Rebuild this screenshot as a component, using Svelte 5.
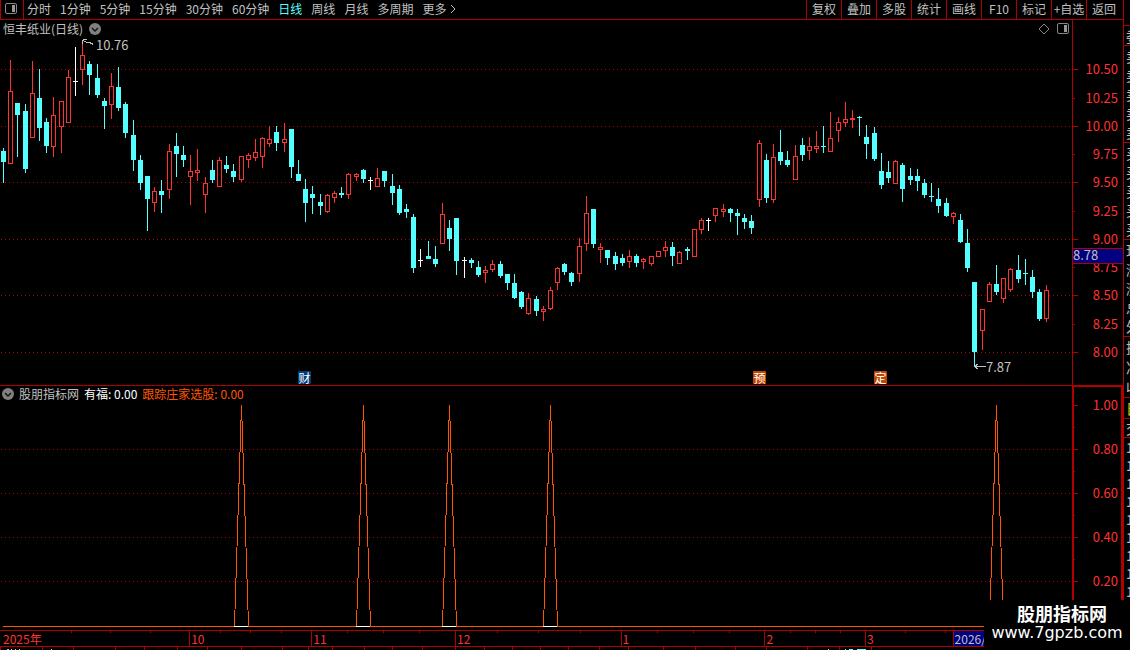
<script>
    const periods = ["分时", "1分钟", "5分钟", "15分钟", "30分钟", "60分钟", "日线", "周线", "月线", "多周期"];
    const tools = ["复权", "叠加", "多股", "统计", "画线", "F10", "标记", "+自选", "返回"];
    let activePeriod = "日线";

    // x, high, low, body top, body bottom, u = up, d = down, w = flat
    const candles = [
        [3, 148, 183, 151, 162, "d"], [10, 60, 164, 91, 164, "u"], [17, 103, 157, 103, 115, "d"], [25, 104, 173, 111, 169, "d"],
        [32, 61, 138, 93, 138, "u"], [39, 69, 141, 98, 128, "d"], [46, 118, 153, 122, 146, "d"], [53, 97, 157, 115, 147, "u"],
        [61, 101, 153, 101, 127, "u"], [68, 70, 123, 77, 123, "u"], [75, 47, 96, 81, 82, "w"], [82, 43, 85, 55, 70, "u"],
        [89, 61, 95, 64, 75, "d"], [97, 64, 98, 78, 95, "d"], [104, 98, 129, 101, 106, "d"], [111, 73, 119, 86, 105, "u"],
        [118, 67, 111, 87, 108, "d"], [125, 102, 138, 104, 133, "d"], [133, 120, 171, 135, 160, "d"], [140, 155, 190, 160, 183, "d"],
        [147, 176, 231, 176, 199, "d"], [154, 187, 212, 191, 203, "u"], [161, 180, 213, 191, 195, "d"], [169, 144, 199, 151, 190, "u"],
        [176, 133, 177, 146, 154, "d"], [183, 146, 167, 155, 160, "d"], [190, 155, 205, 171, 177, "u"], [197, 149, 181, 170, 173, "u"],
        [205, 177, 213, 183, 195, "u"], [212, 160, 183, 170, 180, "d"], [219, 157, 187, 160, 187, "u"], [226, 156, 173, 165, 169, "d"],
        [233, 164, 182, 171, 177, "d"], [241, 156, 182, 156, 180, "u"], [248, 153, 168, 155, 160, "u"], [255, 139, 161, 152, 158, "u"],
        [262, 137, 168, 138, 157, "u"], [269, 126, 147, 139, 144, "u"], [276, 126, 151, 132, 143, "d"], [284, 123, 152, 139, 143, "u"],
        [291, 129, 178, 129, 167, "d"], [298, 160, 181, 174, 181, "d"], [305, 179, 222, 189, 203, "d"], [312, 186, 214, 194, 198, "d"],
        [320, 194, 215, 202, 206, "d"], [327, 194, 213, 195, 212, "u"], [334, 191, 203, 193, 198, "u"], [341, 187, 198, 193, 195, "d"],
        [348, 173, 199, 174, 195, "u"], [356, 173, 181, 174, 177, "u"], [363, 169, 183, 170, 179, "d"], [370, 177, 190, 180, 181, "w"],
        [377, 168, 187, 178, 187, "u"], [384, 171, 187, 171, 181, "d"], [392, 174, 205, 186, 193, "d"], [399, 185, 215, 189, 213, "d"],
        [406, 204, 218, 209, 212, "d"], [413, 214, 273, 217, 268, "d"], [420, 249, 267, 260, 261, "w"], [428, 241, 259, 256, 259, "d"],
        [435, 246, 267, 259, 264, "d"], [442, 203, 244, 214, 244, "u"], [449, 220, 251, 228, 239, "d"], [456, 218, 275, 218, 261, "d"],
        [464, 257, 278, 260, 261, "w"], [471, 258, 268, 260, 263, "d"], [478, 261, 277, 267, 275, "d"], [485, 266, 283, 270, 273, "u"],
        [492, 260, 272, 264, 270, "u"], [500, 261, 278, 264, 276, "d"], [507, 274, 290, 274, 283, "d"], [514, 274, 299, 283, 298, "d"],
        [521, 291, 309, 292, 307, "d"], [528, 293, 315, 298, 314, "u"], [536, 296, 316, 299, 311, "d"], [543, 306, 321, 309, 312, "u"],
        [550, 287, 310, 290, 309, "u"], [557, 267, 290, 268, 283, "u"], [564, 263, 275, 264, 272, "d"], [571, 272, 286, 273, 282, "d"],
        [579, 238, 282, 246, 274, "u"], [586, 196, 251, 213, 244, "u"], [593, 209, 248, 209, 244, "d"], [600, 243, 263, 247, 250, "u"],
        [607, 250, 265, 250, 258, "d"], [615, 252, 270, 256, 264, "d"], [622, 254, 266, 258, 263, "d"], [629, 250, 268, 256, 262, "u"],
        [636, 254, 267, 256, 263, "d"], [643, 258, 269, 259, 262, "u"], [651, 256, 266, 256, 264, "u"], [658, 251, 257, 251, 257, "u"],
        [665, 241, 257, 247, 251, "u"], [672, 242, 266, 247, 256, "d"], [679, 251, 264, 252, 264, "u"], [687, 247, 260, 249, 251, "d"],
        [694, 229, 257, 229, 257, "u"], [701, 218, 234, 220, 230, "u"], [708, 218, 231, 220, 221, "w"], [715, 208, 222, 208, 216, "u"],
        [723, 204, 217, 209, 212, "u"], [730, 208, 222, 209, 213, "d"], [737, 209, 235, 213, 216, "d"], [744, 214, 229, 218, 222, "d"],
        [751, 215, 234, 221, 228, "d"], [759, 140, 207, 143, 200, "u"], [766, 154, 203, 160, 198, "d"], [773, 144, 203, 157, 200, "u"],
        [780, 130, 165, 152, 161, "d"], [787, 151, 167, 160, 165, "d"], [795, 145, 180, 156, 180, "u"], [802, 138, 161, 145, 155, "d"],
        [809, 137, 160, 146, 151, "u"], [816, 131, 153, 146, 149, "u"], [823, 126, 153, 146, 147, "d"], [830, 112, 152, 138, 152, "u"],
        [838, 117, 142, 122, 131, "u"], [845, 102, 127, 119, 123, "u"], [852, 110, 128, 118, 120, "u"], [859, 116, 136, 117, 118, "d"],
        [866, 125, 159, 137, 144, "d"], [874, 127, 161, 133, 159, "d"], [881, 153, 189, 171, 185, "d"], [888, 161, 183, 172, 178, "d"],
        [895, 160, 184, 161, 184, "u"], [902, 163, 202, 165, 189, "d"], [910, 168, 185, 176, 180, "d"], [917, 169, 191, 176, 181, "d"],
        [924, 179, 198, 183, 195, "d"], [931, 183, 202, 196, 197, "d"], [938, 188, 213, 199, 206, "d"], [946, 198, 217, 203, 216, "d"],
        [953, 212, 224, 213, 217, "u"], [960, 214, 243, 220, 242, "d"], [967, 229, 272, 243, 268, "d"], [974, 282, 367, 282, 352, "d"],
        [982, 309, 350, 309, 331, "u"], [989, 282, 302, 284, 302, "u"], [996, 265, 295, 284, 292, "d"], [1003, 278, 303, 278, 299, "u"],
        [1010, 268, 292, 269, 290, "u"], [1018, 255, 283, 270, 279, "d"], [1025, 259, 285, 273, 274, "d"], [1032, 270, 298, 277, 292, "d"],
        [1039, 289, 321, 292, 319, "d"], [1046, 285, 322, 290, 319, "u"],
    ];

    const prices = [
        ["10.50", 69], ["10.25", 98], ["10.00", 126], ["9.75", 154], ["9.50", 182], ["9.25", 211],
        ["9.00", 239], ["8.75", 267], ["8.50", 295], ["8.25", 324], ["8.00", 352],
    ];
    const levels = [["1.00", 405], ["0.80", 449], ["0.60", 493], ["0.40", 537], ["0.20", 581]];
    const peaks = [241, 363, 449, 550, 996];

    const notes = [
        { text: "10.76", x: 96, y: -1 },
        { text: "7.87", x: 986, y: 321 },
    ];
    const events = [
        { text: "财", x: 298, kind: "report" },
        { text: "预", x: 753, kind: "notice" },
        { text: "定", x: 874, kind: "notice" },
    ];

    const months = [
        ["2025年", 189], ["10", 122], ["11", 144], ["12", 166], ["1", 144], ["2", 100], ["3", 87], ["2026/", 171],
    ];
    const monthTicks = [71, 110, 150, 220, 250, 281, 347, 383, 419, 497, 538, 580, 657, 693, 729, 790, 815, 840, 905, 945];
    const rulerTicks = [0, 42, 73, 115, 144, 177, 207, 241, 282, 308, 332, 364, 392, 422, 455, 484, 512, 540, 568, 599, 628, 663, 695, 735, 766, 807, 839, 871];

    // left edge of the quote panel
    const quotes = [
        { rows: [], height: 26 },
        { rows: ["委"], height: 20 },
        { rows: ["卖", "卖", "卖", "卖", "卖"], height: 97 },
        { rows: ["买", "买", "买", "买", "买"], height: 97 },
        { rows: ["现", "涨", "涨", "总", "外"], height: 97 },
        { rows: ["换", "净", "收"], height: 61 },
        { rows: ["日"], height: 21, kind: "tab" },
        { rows: ["交"], height: 19 },
    ];
    const ticks = [1, 2, 3, 4, 5, 6, 7, 8, 9];
</script>

{#snippet chevron()}
    <svg width="12" height="12" viewBox="0 0 12 12">
        <circle cx="6" cy="6" r="6" fill="#808080" />
        <path d="M3 5l3 3 3-3" fill="none" stroke="#101010" stroke-width="1.4" />
    </svg>
{/snippet}

{#snippet panelIcon()}
    <svg width="12" height="12" viewBox="0 0 12 12">
        <rect x="0.5" y="0.5" width="11" height="10" rx="1.5" fill="none" stroke="#888" />
        <rect x="7" y="2" width="3" height="7" fill="#999" />
    </svg>
{/snippet}

<main>
    <div class="terminal">
        <nav class="toolbar">
            <button class="layout" aria-label="layout">{@render panelIcon()}</button>
            <div class="periods">
                {#each periods as period}
                    <button class:active={activePeriod == period} on:click={() => (activePeriod = period)}>{period}</button>
                {/each}
                <button class="more">
                    更多
                    <svg width="6" height="10" viewBox="0 0 6 10"><path d="M1 1l4 4-4 4" fill="none" stroke="#c0c0c0" /></svg>
                </button>
            </div>
            <div class="tools">
                {#each tools as tool}
                    <button>{tool}</button>
                {/each}
            </div>
        </nav>

        <section class="pane">
            <div class="plot">
                <header class="title">
                    <span>恒丰纸业(日线)</span>
                    {@render chevron()}
                    <span class="window-icons">
                        <svg width="12" height="12" viewBox="0 0 12 12"><path d="M6 1l5 5-5 5-5-5z" fill="none" stroke="#888" /></svg>
                        {@render panelIcon()}
                    </span>
                </header>
                <div class="canvas">
                    <svg class="price-chart" viewBox="0 38 1072 347" preserveAspectRatio="none" shape-rendering="crispEdges">
                        {#each prices as [, y], i}
                            {#if i % 2 == 0}
                                <line class="grid" x1="1" x2="1072" y1={y + 0.5} y2={y + 0.5} />
                            {/if}
                        {/each}
                        {#each candles as [x, high, low, top, bottom, kind]}
                            <g class={kind}>
                                <rect class="fill" {x} y={high} width="1" height={low - high} />
                                {#if kind == "u" && bottom - top > 2}
                                    <rect class="hollow" x={x - 1.5} y={top + 0.5} width="4" height={bottom - top - 1} />
                                {:else}
                                    <rect class="fill" x={x - 2} y={top} width="5" height={bottom - top} />
                                {/if}
                            </g>
                        {/each}
                        <path class="arrow" d="M86.5 39.5h-3l-1 1v3M83.5 40.500l3 2h3l4 2" />
                        <path class="arrow" d="M974.500 366.500H985.500M978.500 363.500L974.500 366.500L978.500 369.500" />
                    </svg>
                    {#each notes as note}
                        <span class="note" style="left: {(note.x / 1072) * 100}%; top: {note.y}px">{note.text}</span>
                    {/each}
                    {#each events as event}
                        <span class="event {event.kind}" style="left: {(event.x / 1072) * 100}%">{event.text}</span>
                    {/each}
                </div>
            </div>
            <svg class="axis" width="51" height="365" viewBox="1072 20 51 365" shape-rendering="crispEdges">
                <rect class="rule" x="1072" y="20" width="1" height="365" />
                {#each prices as [label, y], i}
                    <rect class="rule" x="1073" {y} width={i % 2 == 0 ? 5 : 2} height="1" />
                    <text x="1118" y={y + 5} text-anchor="end">{label}</text>
                {/each}
                <rect x="1072.500" y="248.500" width="51" height="15" fill="#000080" stroke="#b00000" />
                <text class="current" x="1073" y="260">8.78</text>
            </svg>
        </section>

        <section class="pane indicator">
            <div class="plot">
                <header class="title">
                    {@render chevron()}
                    <span>股朋指标网</span>
                    <span class="white">有福: 0.00</span>
                    <span class="orange">跟踪庄家选股: 0.00</span>
                </header>
                <svg class="signal-chart" viewBox="0 402 1072 228" preserveAspectRatio="none" shape-rendering="crispEdges">
                    {#each levels.slice(1) as [, y]}
                        <line class="grid" x1="1" x2="1072" y1={y + 0.5} y2={y + 0.5} />
                    {/each}
                    <line class="signal" x1="3" x2="1047" y1="626.5" y2="626.5" />
                    {#each peaks as x}
                        <path class="signal" d="M{x - 6.5} 626L{x + 0.5} 405L{x + 7.5} 626" />
                        <rect x={x - 7} y="626" width="14" height="1" fill="#fff" />
                    {/each}
                </svg>
            </div>
            <svg class="axis" width="51" height="244" viewBox="1072 386 51 244" shape-rendering="crispEdges">
                <path d="M1073 630V386H1122V630" fill="none" stroke="#b00000" stroke-width="2" />
                {#each levels as [label, y]}
                    <rect class="rule" x="1074" {y} width="4" height="1" />
                    <rect class="rule" x="1074" y={y + 22} width="1" height="1" />
                    <text x="1118" y={y + 5} text-anchor="end">{label}</text>
                {/each}
            </svg>
        </section>

        <div class="timeline">
            {#each months as [label, size], i}
                <span class:selected={i == months.length - 1} style="flex-grow: {size}">{label}</span>
            {/each}
            <svg class="ticks" viewBox="0 0 1123 2" preserveAspectRatio="none" shape-rendering="crispEdges">
                {#each monthTicks as x}
                    <rect class="rule" {x} y="0" width="1" height="2" />
                {/each}
            </svg>
        </div>
        <svg class="ruler" viewBox="0 0 1123 3" preserveAspectRatio="none" shape-rendering="crispEdges">
            {#each rulerTicks as x}
                <rect class="rule" {x} y="0" width="1" height="3" />
            {/each}
            <path d="M7 2.500h2M11 2.500h1M15 2.500h1M19 2.500h1M51 2.500h1M828 2.500h1" stroke="#c0c0c0" />
            <path d="M845 2.500h1M849 2.500h4M857 2.500h9" stroke="#54ffff" />
        </svg>
    </div>

    <aside>
        {#each quotes as group}
            <div class="group {group.kind}" style="height: {group.height}px">
                {#each group.rows as row}
                    <span>{row}</span>
                {/each}
            </div>
        {/each}
        {#each ticks as tick (tick)}
            <span class="tick">1</span>
        {/each}
    </aside>

    <div class="watermark">
        <strong>股朋指标网</strong>
        <span>www.7gpzb.com</span>
    </div>
</main>

<style>
    :global(body) {
        margin: 0;
        background: #000;
    }
    main {
        position: relative;
        display: flex;
        min-height: 100vh;
        overflow: hidden;
        background: #000;
        color: #c0c0c0;
        font-family: "Noto Sans CJK SC", "Liberation Sans", sans-serif;
        font-size: 12px;
        line-height: 16px;
    }
    svg {
        display: block;
        flex-shrink: 0;
    }
    button {
        padding: 0;
        border: none;
        background: none;
        color: inherit;
        font: inherit;
        white-space: nowrap;
        cursor: pointer;
    }
    .terminal {
        flex: 1;
        min-width: 0;
    }
    .toolbar {
        display: flex;
        height: 19px;
        border-bottom: 1px solid #b00000;
    }
    .toolbar button {
        padding-bottom: 2px;
    }
    .toolbar .layout {
        width: 24px;
        padding-left: 4px;
        box-sizing: border-box;
        border-right: 1px solid #b00000;
        border-left: 1px solid #b00000;
    }
    .periods {
        display: flex;
        gap: 9px;
        padding-left: 3px;
    }
    .periods .active {
        color: #54ffff;
    }
    .more {
        display: flex;
        align-items: center;
        gap: 4px;
    }
    .tools {
        display: flex;
        margin-left: auto;
        padding-right: 2px;
    }
    .tools button {
        width: 35px;
        border-left: 1px solid #b00000;
    }
    .pane {
        display: flex;
        border-bottom: 1px solid #b00000;
    }
    .indicator {
        border-bottom: none;
    }
    .plot {
        flex: 1;
        min-width: 0;
    }
    .title {
        display: flex;
        align-items: center;
        gap: 6px;
        height: 18px;
        padding: 0 3px;
    }
    .indicator .title {
        gap: 5px;
        height: 16px;
        padding: 0 2px;
    }
    .window-icons {
        display: flex;
        gap: 7px;
        margin-left: auto;
    }
    .white {
        color: #fff;
    }
    .orange {
        color: #ff5500;
    }
    .canvas {
        position: relative;
    }
    .price-chart {
        width: 100%;
        height: 347px;
        overflow: visible;
    }
    .signal-chart {
        width: 100%;
        height: 228px;
    }
    .grid {
        stroke: #b00000;
        stroke-dasharray: 1 3;
    }
    .u .fill {
        fill: #ff3232;
    }
    .d .fill {
        fill: #54ffff;
    }
    .w .fill {
        fill: #fff;
    }
    .hollow {
        fill: #000;
        stroke: #ff3232;
    }
    .arrow {
        fill: none;
        stroke: #c0c0c0;
    }
    .signal {
        fill: none;
        stroke: #ff5500;
    }
    .rule {
        fill: #b00000;
    }
    .axis text {
        fill: #ff3232;
        font-size: 13px;
    }
    .axis .current {
        fill: #c0c0c0;
    }
    .note {
        position: absolute;
        font-size: 13px;
    }
    .event {
        position: absolute;
        bottom: 1px;
        width: 13px;
        height: 13px;
        border-radius: 1px;
        color: #fff;
        line-height: 13px;
        text-align: center;
    }
    .report {
        background: #003c78;
    }
    .notice {
        background: #c04600;
    }
    /* month labels under both charts */
    .timeline {
        position: relative;
        display: flex;
        height: 15px;
        border-top: 1px solid #b00000;
        border-bottom: 1px solid #b00000;
        color: #ff3232;
        line-height: 15px;
    }
    .timeline span {
        flex-basis: 0;
        box-sizing: border-box;
        padding-left: 1px;
        border-left: 1px solid #b00000;
    }
    .timeline span:first-child {
        padding-left: 3px;
        border-left: none;
    }
    .timeline .selected {
        background: #000080;
        color: #c0c0c0;
    }
    .ticks {
        position: absolute;
        top: 0;
        left: 0;
        width: 100%;
        height: 2px;
    }
    .ruler {
        width: 100%;
        height: 3px;
    }
    aside {
        width: 6px;
        overflow: hidden;
        border-left: 1px solid #b00000;
        font-size: 14px;
    }
    .group {
        display: flex;
        flex-direction: column;
        justify-content: space-around;
        box-sizing: border-box;
        padding-left: 2px;
        border-bottom: 1px solid #b00000;
    }
    .tab {
        color: #d8d800;
    }
    .tick {
        display: block;
        padding-left: 2px;
        font-weight: 500;
        line-height: 18px;
    }
    .watermark {
        position: absolute;
        right: 0;
        bottom: 0;
        display: flex;
        flex-direction: column;
        align-items: center;
        box-sizing: border-box;
        width: 146px;
        height: 50px;
        padding-top: 3px;
        background: #000;
        color: #fff;
    }
    .watermark strong {
        padding-left: 10px;
        font-size: 18px;
        line-height: 20px;
    }
    .watermark span {
        font-family: "DejaVu Sans", sans-serif;
        font-size: 16px;
        line-height: 20px;
    }
</style>
